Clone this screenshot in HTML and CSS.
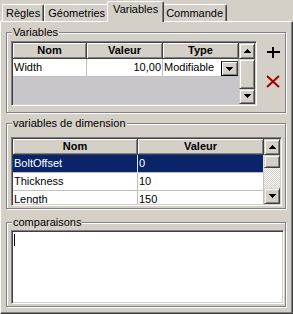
FILE: index.html
```html
<!DOCTYPE html>
<html lang="fr">
<head>
    <meta charset="UTF-8">
    <title>Variables</title>
    <link rel="stylesheet" href="styles.css">
</head>
<body>

<div class="window">
    <div class="tabs">
        <div class="tab">Règles</div>
        <div class="tab">Géometries</div>
        <div class="tab tab-active">Variables</div>
        <div class="tab">Commande</div>
    </div>

    <div class="panel">
        <div class="group group-vars">
            <div class="group-title">Variables</div>
            <div class="vars-row">
                <div class="grid grid-vars">
                    <div class="grid-body">
                        <div class="grid-head cols-vars">
                            <div>Nom</div>
                            <div>Valeur</div>
                            <div>Type</div>
                        </div>
                        <div class="grid-row cols-vars">
                            <div>Width</div>
                            <div class="num">10,00</div>
                            <div class="combo">
                                <span>Modifiable</span>
                                <span class="drop">
                                    <svg width="7" height="4" viewBox="0 0 7 4"><path d="M0 0h7v1H0zM1 1h5v1H1zM2 2h3v1H2zM3 3h1v1H3z"/></svg>
                                </span>
                            </div>
                        </div>
                    </div>
                    <div class="vscroll">
                        <div class="sbtn"><svg width="7" height="4" viewBox="0 0 7 4"><path d="M0 3h7v1H0zM1 2h5v1H1zM2 1h3v1H2zM3 0h1v1H3z"/></svg></div>
                        <div class="thumb thumb-vars"></div>
                        <div class="track"></div>
                        <div class="sbtn"><svg width="7" height="4" viewBox="0 0 7 4"><path d="M0 0h7v1H0zM1 1h5v1H1zM2 2h3v1H2zM3 3h1v1H3z"/></svg></div>
                    </div>
                </div>

                <div class="actions">
                    <svg class="icon-add" width="13" height="11" viewBox="0 0 13 11"><path d="M0 4h13v2H0zM5 0h2v11H5z" fill="#000"/></svg>
                    <svg class="icon-del" width="14" height="13" viewBox="0 0 14 13"><path d="M1 1l12 11M13 1L1 12" stroke="#a00000" stroke-width="2" fill="none"/></svg>
                </div>
            </div>
        </div>

        <div class="group group-dim">
            <div class="group-title">variables de dimension</div>
            <div class="grid grid-dim">
                <div class="grid-body">
                    <div class="grid-head cols-dim">
                        <div>Nom</div>
                        <div>Valeur</div>
                    </div>
                    <div class="grid-row cols-dim selected">
                        <div>BoltOffset</div>
                        <div>0</div>
                    </div>
                    <div class="grid-row cols-dim">
                        <div>Thickness</div>
                        <div>10</div>
                    </div>
                    <div class="grid-row cols-dim">
                        <div>Length</div>
                        <div>150</div>
                    </div>
                </div>
                <div class="vscroll">
                    <div class="sbtn"><svg width="7" height="4" viewBox="0 0 7 4"><path d="M0 3h7v1H0zM1 2h5v1H1zM2 1h3v1H2zM3 0h1v1H3z"/></svg></div>
                    <div class="thumb thumb-dim"></div>
                    <div class="track"></div>
                    <div class="sbtn"><svg width="7" height="4" viewBox="0 0 7 4"><path d="M0 0h7v1H0zM1 1h5v1H1zM2 2h3v1H2zM3 3h1v1H3z"/></svg></div>
                </div>
            </div>
        </div>

        <div class="group group-cmp">
            <div class="group-title">comparaisons</div>
            <div class="memo"><span class="caret"></span></div>
        </div>
    </div>
</div>

</body>
</html>
```

FILE: styles.css
```css
* {
    box-sizing: border-box;
    margin: 0;
    padding: 0;
}

body {
    background: #d4d0c8;
    color: #000;
    font-family: "Liberation Sans", Arial, sans-serif;
    font-size: 11px;
}

.window {
    width: 293px;
    height: 314px;
    display: flex;
    flex-direction: column;
}

/* tab strip */
.tabs {
    display: flex;
    align-items: flex-end;
    height: 21px;
    padding-left: 2px;
}

.tab {
    height: 17px;
    padding: 2px 3px 0;
    line-height: 13px;
    border: 1px solid;
    border-bottom: 0;
    border-color: #fff #404040 transparent #fff;
    border-radius: 2px 2px 0 0;
    box-shadow: inset -1px 0 #808080;
    white-space: nowrap;
}

.tab-active {
    height: 21px;
    padding: 1px 5px 0;
    margin: 0 -2px -1px;
    background: #d4d0c8;
    z-index: 1;
}

.panel {
    flex: 1;
    display: flex;
    flex-direction: column;
    padding: 10px 6px 0 5px;
    border: 1px solid;
    border-color: #fff #404040 #404040 #fff;
    box-shadow: inset -1px -1px #808080;
}

/* etched group boxes */
.group {
    border: 1px solid #808080;
    box-shadow: 1px 1px #fff, inset 1px 1px #fff;
    padding: 0 4px;
}

.group-title {
    width: fit-content;
    margin: -7px 0 0 1px;
    padding: 0 1px;
    line-height: 13px;
    background: #d4d0c8;
}

.group-vars {
    padding-bottom: 6px;
}

.group-dim {
    margin-top: 10px;
    padding-bottom: 2px;
}

.group-cmp {
    margin-top: 13px;
    padding-bottom: 2px;
}

.vars-row {
    display: flex;
    align-items: flex-start;
    margin-top: 2px;
}

/* grids */
.grid {
    display: flex;
    border: 1px solid;
    border-color: #808080 #fff #fff #808080;
    box-shadow: inset 1px 1px #404040, inset -1px -1px #d4d0c8;
    padding: 1px;
    overflow: hidden;
}

.grid-vars {
    width: 246px;
    height: 65px;
}

.grid-dim {
    width: 271px;
    height: 69px;
    margin-top: 7px;
}

.grid-body {
    flex: 1;
    min-width: 0;
    background: #c8c6cb;
    overflow: hidden;
}

.cols-vars {
    display: grid;
    grid-template-columns: 74px 76px 1fr;
}

.cols-dim {
    display: grid;
    grid-template-columns: 125px 1fr;
}

.grid-head div {
    height: 16px;
    line-height: 14px;
    text-align: center;
    font-weight: bold;
    background: #d4d0c8;
    border-right: 1px solid #404040;
    border-bottom: 1px solid #404040;
    box-shadow: inset 1px 1px #fff, inset -1px -1px #808080;
}

.grid-row div {
    height: 18px;
    line-height: 17px;
    padding: 0 1px;
    background: #fff;
    border-right: 1px solid #c0c0c0;
    border-bottom: 1px solid #c0c0c0;
    white-space: nowrap;
    overflow: hidden;
}

.grid-row .num {
    text-align: right;
}

.grid-row .combo {
    display: flex;
    justify-content: space-between;
    align-items: flex-end;
    padding-right: 0;
}

.combo span:first-child {
    line-height: 17px;
    align-self: center;
}

.drop {
    width: 17px;
    height: 15px;
    display: flex;
    justify-content: center;
    align-items: center;
    background: #d4d0c8;
    border: 1px solid;
    border-color: #404040 #404040 #000 #000;
    box-shadow: inset 1px 1px #fff, inset -1px -1px #808080;
}

.selected div {
    background: #0a246a;
    color: #fff;
    border-right-color: #e0e0e0;
}

/* scrollbars */
.vscroll {
    width: 16px;
    display: flex;
    flex-direction: column;
}

.sbtn,
.thumb {
    background: #d4d0c8;
    border: 1px solid;
    border-color: #d4d0c8 #404040 #404040 #d4d0c8;
    box-shadow: inset 1px 1px #fff, inset -1px -1px #808080;
}

.sbtn {
    height: 16px;
    display: flex;
    justify-content: center;
    align-items: center;
}

.thumb-vars {
    height: 31px;
}

.thumb-dim {
    height: 13px;
}

.track {
    flex: 1;
    background: repeating-conic-gradient(#fff 0 25%, #d4d0c8 0 50%) 0 0 / 2px 2px;
}

/* add / delete buttons */
.actions {
    display: flex;
    flex-direction: column;
    align-items: center;
    gap: 17px;
    margin-left: 9px;
    padding-top: 6px;
}

.icon-add,
.icon-del {
    display: block;
}

/* comparison memo */
.memo {
    width: 273px;
    height: 74px;
    margin-top: 1px;
    padding: 3px 2px;
    background: #fff;
    border: 1px solid;
    border-color: #808080 #fff #fff #808080;
    box-shadow: inset 1px 1px #404040, inset -1px -1px #d4d0c8;
}

.caret {
    display: block;
    width: 1px;
    height: 12px;
    background: #000;
}
```
